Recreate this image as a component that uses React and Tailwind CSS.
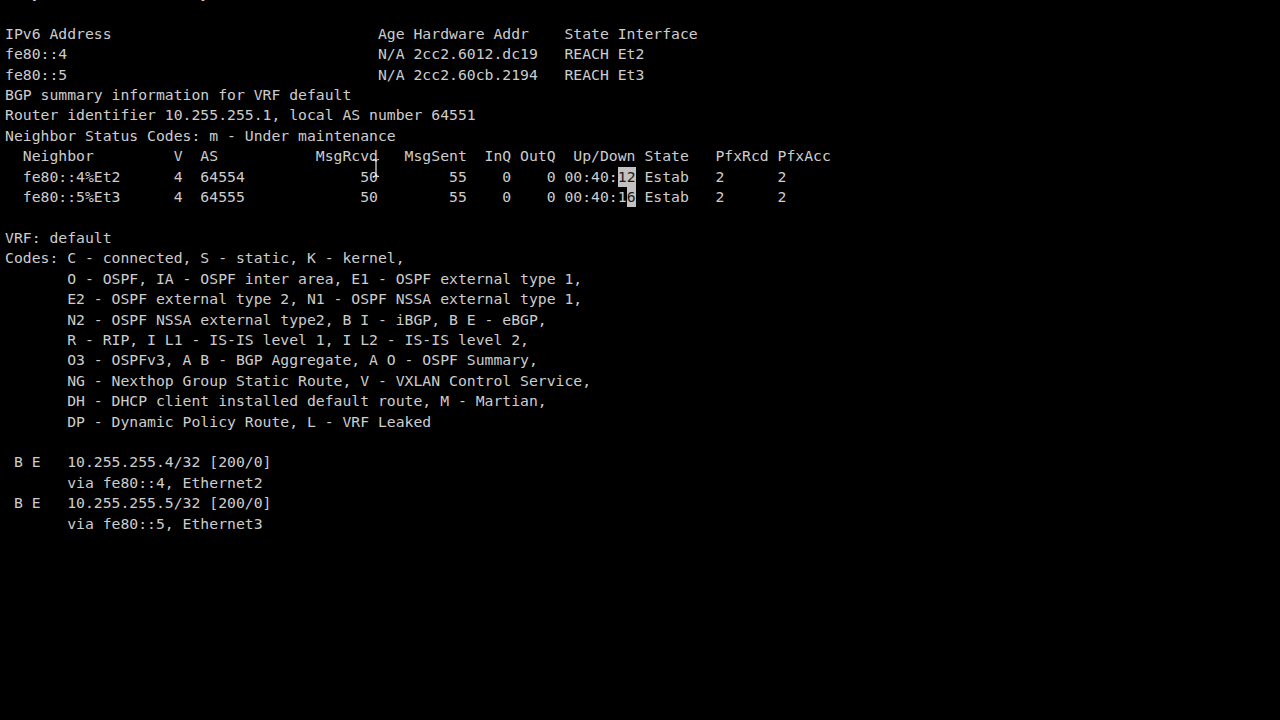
import React from "react";

const pad = (s, n) => s.padEnd(n, " ");
const rpad = (s, n) => s.padStart(n, " ");

// builds one neighbor row of the bgp summary, everything up to the Up/Down time
const neighborHead = (peer, as, rcvd, sent) =>
  pad(pad(pad("  " + peer, 19) + "4", 22) + as, 22 + 5) +
  rpad(rcvd, 15) +
  rpad(sent, 10) +
  rpad("0", 5) +
  rpad("0", 5) +
  " 00:40:1";

const neighborTail = pad(pad(" Estab", 80 - 71) + "2", 87 - 71) + "2";

const before = [
  "They are now both ready",
  "",
  pad("IPv6 Address", 42) + "Age Hardware Addr    State Interface",
  pad("fe80::4", 42) + "N/A 2cc2.6012.dc19   REACH Et2",
  pad("fe80::5", 42) + "N/A 2cc2.60cb.2194   REACH Et3",
  "BGP summary information for VRF default",
  "Router identifier 10.255.255.1, local AS number 64551",
  "Neighbor Status Codes: m - Under maintenance",
  "  Neighbor         V  AS           MsgRcvd   MsgSent  InQ OutQ  Up/Down State   PfxRcd PfxAcc",
];

const after = [
  "",
  "VRF: default",
  "Codes: C - connected, S - static, K - kernel,",
  "       O - OSPF, IA - OSPF inter area, E1 - OSPF external type 1,",
  "       E2 - OSPF external type 2, N1 - OSPF NSSA external type 1,",
  "       N2 - OSPF NSSA external type2, B I - iBGP, B E - eBGP,",
  "       R - RIP, I L1 - IS-IS level 1, I L2 - IS-IS level 2,",
  "       O3 - OSPFv3, A B - BGP Aggregate, A O - OSPF Summary,",
  "       NG - Nexthop Group Static Route, V - VXLAN Control Service,",
  "       DH - DHCP client installed default route, M - Martian,",
  "       DP - Dynamic Policy Route, L - VRF Leaked",
  "",
  " B E   10.255.255.4/32 [200/0]",
  "       via fe80::4, Ethernet2",
  " B E   10.255.255.5/32 [200/0]",
  "       via fe80::5, Ethernet3",
];

const Line = ({ children }) => <div className="h-[20.42px]">{children || " "}</div>;

export default function App() {
  const head1 = neighborHead("fe80::4%Et2", "64554", "50", "55");
  const head2 = neighborHead("fe80::5%Et3", "64555", "50", "55");

  return (
    <div className="w-[1280px] h-[720px] bg-black overflow-hidden">
      <div className="relative mt-[-17px] pl-[5px] font-['DejaVu_Sans_Mono',monospace] text-[14.76px] leading-[20.42px] text-[#cdcdcd] whitespace-pre">
        {before.map((l, i) => (
          <Line key={"b" + i}>{l}</Line>
        ))}
        <Line>
          {head1.slice(0, -1)}
          <span className="inline-block bg-[#c2c2c2] text-[#1a1a1a]">12</span>
          {neighborTail}
        </Line>
        <Line>
          {head2}
          <span className="inline-block bg-[#c2c2c2] text-[#1a1a1a]">6</span>
          {neighborTail}
        </Line>
        {after.map((l, i) => (
          <Line key={"a" + i}>{l}</Line>
        ))}

        {/* mouse i-beam sitting over the MsgRcvd column */}
        <svg
          className="absolute left-[371px] top-[175px]"
          width="10"
          height="20"
          viewBox="0 0 10 20"
          fill="none"
          stroke="#e8e8e8"
          strokeWidth="1.2"
        >
          <path d="M2 1.5c1.5 0 3 .5 3 2v13c0 1.5-1.5 2-3 2" />
          <path d="M8 1.5c-1.5 0-3 .5-3 2M5 16.5c0 1.5 1.5 2 3 2" />
        </svg>
      </div>
    </div>
  );
}
